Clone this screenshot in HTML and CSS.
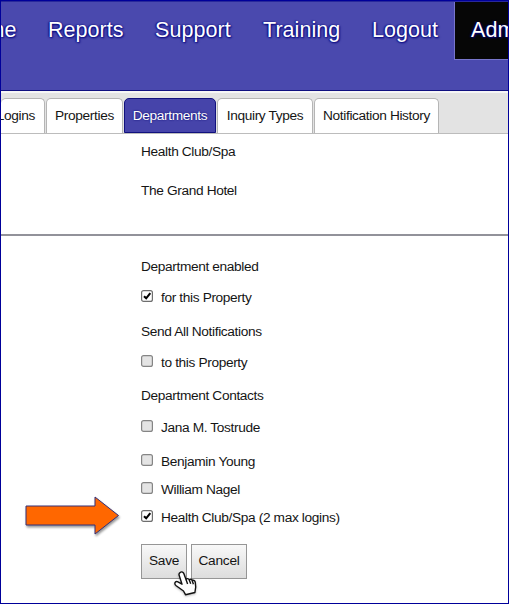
FILE: index.html
```html
<!DOCTYPE html>
<html lang="en">
<head>
<meta charset="utf-8">
<title>Departments</title>
<link rel="stylesheet" href="styles.css">
</head>
<body>
<div class="page">
  <header class="header">
    <nav class="nav">
      <a class="home">Home</a><a class="reports">Reports</a><a class="support">Support</a><a class="training">Training</a><a class="logout">Logout</a><a class="admin">Admin</a>
    </nav>
  </header>
  <div class="tabs">
    <a class="tab logins"><span>Logins</span></a>
    <a class="tab properties">Properties</a>
    <a class="tab departments active">Departments</a>
    <a class="tab inquiry">Inquiry Types</a>
    <a class="tab history">Notification History</a>
  </div>
  <section class="summary">
    <p>Health Club/Spa</p>
    <p>The Grand Hotel</p>
  </section>
  <form class="form">
    <h2>Department enabled</h2>
    <label class="check first"><svg class="box" viewBox="0 0 12 12"><rect x=".6" y=".6" width="10.8" height="10.8" rx="2"/><path d="M3 6.2 5.2 8.3 9.3 3.2"/></svg><span>for this Property</span></label>
    <h2>Send All Notifications</h2>
    <label class="check second"><svg class="box off" viewBox="0 0 12 12"><rect x=".6" y=".6" width="10.8" height="10.8" rx="2"/></svg><span>to this Property</span></label>
    <h2>Department Contacts</h2>
    <label class="check jana"><svg class="box off" viewBox="0 0 12 12"><rect x=".6" y=".6" width="10.8" height="10.8" rx="2"/></svg><span>Jana M. Tostrude</span></label>
    <label class="check young"><svg class="box off" viewBox="0 0 12 12"><rect x=".6" y=".6" width="10.8" height="10.8" rx="2"/></svg><span>Benjamin Young</span></label>
    <label class="check"><svg class="box off" viewBox="0 0 12 12"><rect x=".6" y=".6" width="10.8" height="10.8" rx="2"/></svg><span>William Nagel</span></label>
    <label class="check"><svg class="box" viewBox="0 0 12 12"><rect x=".6" y=".6" width="10.8" height="10.8" rx="2"/><path d="M3 6.2 5.2 8.3 9.3 3.2"/></svg><span>Health Club/Spa (2 max logins)</span></label>
    <div class="actions">
      <button type="button" class="save">Save</button>
      <button type="button" class="cancel">Cancel</button>
    </div>
  </form>
  <svg class="arrow" viewBox="0 0 98 44"><path d="M2 12H71V3L94.500 21.500 71 40V31H2Z"/></svg>
  <svg class="cursor" viewBox="0 0 24 26"><path d="M6.300 2.300C7.900 1.300 9.300 2.200 9.900 3.800L12 9.500C13 8.200 14.600 8.500 15.200 9.700 16.400 8.700 17.800 9.300 18.200 10.500 19.900 9.800 21.100 10.800 21.300 12.600L21.700 17 20.900 22.500 11.500 24.700 9.500 21 2.200 15.800C-.2 13.900.9 11.100 3.400 11.600L8 14.200 5.200 5.400C4.700 4 5.100 3 6.300 2.300Z"/><path class="lines" d="M12 9.500 13.600 14M15.200 9.700 16.700 13.800M18.200 10.500 19.400 14.200"/></svg>
</div>
</body>
</html>
```
FILE: styles.css
```css
* { box-sizing: border-box; }
body { margin: 0; }
.page {
  position: relative;
  width: 509px;
  height: 604px;
  overflow: hidden;
  border: 1px solid #00009a;
  background: #fff;
  color: #151515;
  font: 13.7px/20px "Liberation Sans", Arial, sans-serif;
  letter-spacing: -0.36px;
}
.header {
  height: 90px;
  border-top: 1px solid #28289a;
  border-bottom: 1px solid #101080;
  background: #4a49ae;
}
.nav {
  display: flex;
  width: 600px;
  height: 57px;
  margin-left: -42px;
  color: #fff;
  font-size: 21.5px;
  line-height: 57px;
  letter-spacing: 0.05px;
  text-shadow: 1px 1px 2px #00007c, -1px 0 2px #00007c;
}
.nav a { flex: none; }
.home { width: 89px; }
.reports { width: 107px; }
.support { width: 108px; }
.training { width: 109px; }
.logout { width: 82px; }
.admin {
  width: 100px;
  height: 58px;
  padding-left: 16px;
  border-left: 1px solid #7775cb;
  border-bottom: 1px solid #7775cb;
  background: #060606;
}
.tabs {
  display: flex;
  gap: 1px;
  height: 43px;
  padding-top: 5px;
  border-top: 2px solid #f6f6f6;
  border-bottom: 1px solid #bcbcbc;
  background: #e3e3e3;
}
.tab {
  display: block;
  height: 35px;
  border: 1px solid #b5b5b5;
  border-bottom: 0;
  border-radius: 5px 5px 0 0;
  background: #fff;
  line-height: 33px;
  text-align: center;
  white-space: nowrap;
}
.logins { display: flex; justify-content: flex-end; width: 44px; padding-right: 9px; border-left: 0; }
.properties { width: 77px; }
.departments { width: 92px; }
.inquiry { width: 96px; }
.history { width: 125px; }
.tab.active {
  border: 1px solid #11117e;
  background: #4644aa;
  color: #fff;
  text-shadow: 0 0 2px #00006c;
}
.summary {
  height: 102px;
  padding: 8px 0 0 140px;
  border-bottom: 2px solid #92929a;
}
.summary p { margin: 0 0 19px; }
.form { padding: 21px 0 0 140px; }
.form h2 { margin: 0; font: inherit; }
.check { display: flex; height: 20px; margin-bottom: 8px; line-height: 19px; }
.check.first { margin: 11px 0 14px; }
.check.second { margin: 11px 0 13px; }
.check.jana { margin: 12px 0 14px; }
.box { width: 12px; height: 12px; margin: 2px 8px 0 0; }
.box rect { fill: #fff; stroke: #6e6e6e; stroke-width: 1.2; }
.box.off rect { fill: #e4e4e4; stroke: #858585; }
.box path { fill: none; stroke: #000; stroke-width: 2.1; }
.actions { display: flex; gap: 4px; margin-top: 16px; }
.actions button {
  height: 35px;
  padding: 0 0 1px;
  border: 1px solid #969696;
  background: linear-gradient(#f8f8f8, #dddddd);
  color: #151515;
  font: inherit;
  letter-spacing: -0.25px;
}
.actions .save { width: 46px; }
.actions .cancel { width: 56px; }
.arrow {
  position: absolute;
  left: 23px;
  top: 493px;
  width: 98px;
  height: 44px;
  overflow: visible;
  filter: drop-shadow(1px 2px 1px #0006);
}
.arrow path { fill: #ff6700; stroke: #343078; stroke-width: 1; }
.cursor {
  position: absolute;
  left: 173px;
  top: 569px;
  width: 24px;
  height: 26px;
  overflow: visible;
  filter: drop-shadow(0 1px 1px #0004);
}
.cursor path { fill: #fff; stroke: #111; stroke-width: 1.4; stroke-linejoin: round; }
.cursor .lines { fill: none; }
```
